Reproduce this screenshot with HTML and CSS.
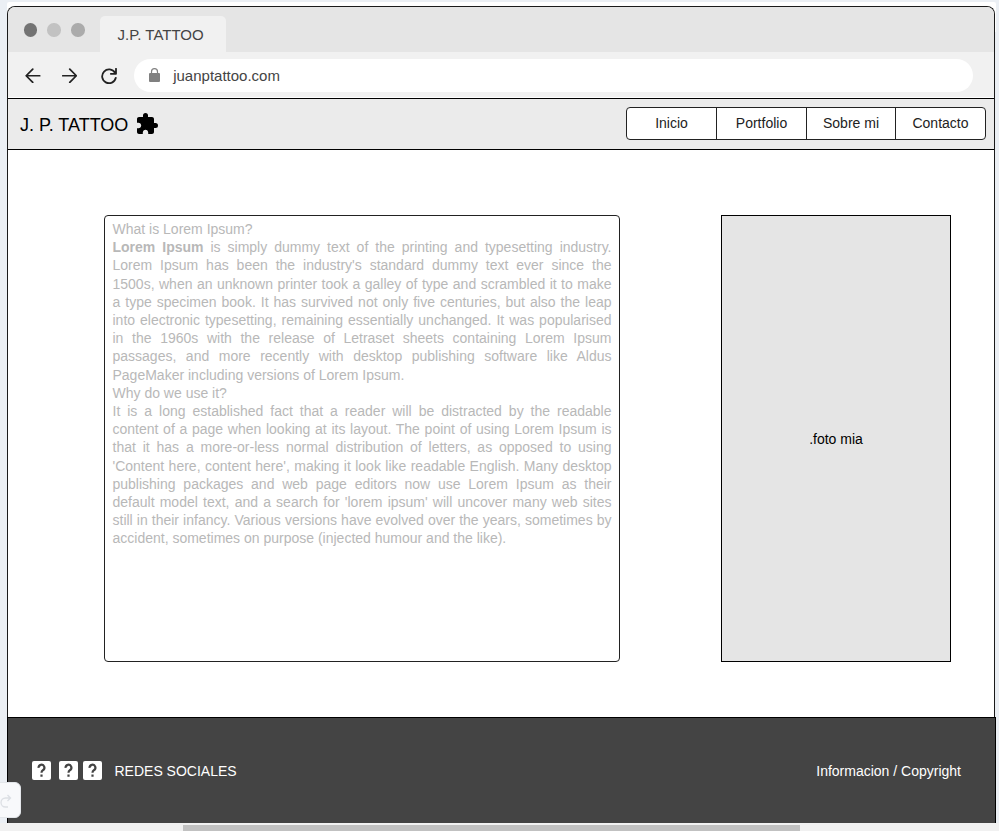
FILE: index.html
```html
<!DOCTYPE html>
<html lang="es">
<head>
<meta charset="utf-8">
<title>J.P. TATTOO</title>
<link rel="stylesheet" href="styles.css">
</head>
<body>
<div class="canvas">
  <div class="window">
    <div class="tabs">
      <span class="dot dark"></span><span class="dot light"></span><span class="dot mid"></span>
      <div class="tab">J.P. TATTOO</div>
    </div>
    <div class="toolbar">
      <svg class="nav back" viewBox="0 0 16 16"><path d="M15.200 8H1.500M8 1.200L1.200 8L8 14.800"/></svg>
      <svg class="nav forward" viewBox="0 0 16 16"><path d="M.8 8H14.500M8 1.200L14.800 8L8 14.800"/></svg>
      <svg class="nav reload" viewBox="0 0 16 16"><path d="M14 4.800A6.900 6.900 0 1 0 14.800 9.800M15 .8V5.800H9.800"/></svg>
      <div class="address">
        <svg class="lock" viewBox="0 0 11 14"><rect y="5" width="11" height="9" rx="1"/><path class="shackle" d="M2.500 5.500V3.700a3 3 0 0 1 6 0v1.800"/></svg>
        <span class="url">juanptattoo.com</span>
      </div>
    </div>
    <header class="header">
      <span class="brand">J. P. TATTOO</span>
      <svg class="puzzle" viewBox="1 1 22 22"><path d="M20.500 11H19V7c0-1.100-.9-2-2-2h-4V3.500a2.500 2.500 0 0 0-5 0V5H4c-1.100 0-1.990.9-1.990 2v3.800H3.500c1.490 0 2.700 1.210 2.700 2.700s-1.210 2.700-2.700 2.700H2V20c0 1.100.9 2 2 2h3.800v-1.500c0-1.490 1.210-2.700 2.700-2.700s2.700 1.210 2.700 2.700V22H17c1.100 0 2-.9 2-2v-4h1.500a2.500 2.500 0 0 0 0-5z"/></svg>
      <nav class="menu"><a>Inicio</a><a>Portfolio</a><a>Sobre mi</a><a>Contacto</a></nav>
    </header>
    <main class="content">
      <section class="article">
        <p>What is Lorem Ipsum?</p>
        <p><b>Lorem Ipsum</b> is simply dummy text of the printing and typesetting industry. Lorem Ipsum has been the industry's standard dummy text ever since the 1500s, when an unknown printer took a galley of type and scrambled it to make a type specimen book. It has survived not only five centuries, but also the leap into electronic typesetting, remaining essentially unchanged. It was popularised in the 1960s with the release of Letraset sheets containing Lorem Ipsum passages, and more recently with desktop publishing software like Aldus PageMaker including versions of Lorem Ipsum.</p>
        <p>Why do we use it?</p>
        <p>It is a long established fact that a reader will be distracted by the readable content of a page when looking at its layout. The point of using Lorem Ipsum is that it has a more-or-less normal distribution of letters, as opposed to using 'Content here, content here', making it look like readable English. Many desktop publishing packages and web page editors now use Lorem Ipsum as their default model text, and a search for 'lorem ipsum' will uncover many web sites still in their infancy. Various versions have evolved over the years, sometimes by accident, sometimes on purpose (injected humour and the like).</p>
      </section>
      <div class="photo">.foto mia</div>
    </main>
  </div>
  <footer class="footer">
    <div class="social">
      <svg viewBox="0 0 19 19"><rect width="19" height="19" rx="2"/><path d="M6.600 6.900A2.900 2.900 0 1 1 10.900 9.200Q9.500 10.200 9.500 11.800M9.500 13.400V15.700"/></svg>
      <svg viewBox="0 0 19 19"><rect width="19" height="19" rx="2"/><path d="M6.600 6.900A2.900 2.900 0 1 1 10.900 9.200Q9.500 10.200 9.500 11.800M9.500 13.400V15.700"/></svg>
      <svg viewBox="0 0 19 19"><rect width="19" height="19" rx="2"/><path d="M6.600 6.900A2.900 2.900 0 1 1 10.900 9.200Q9.500 10.200 9.500 11.800M9.500 13.400V15.700"/></svg>
    </div>
    <span class="networks">REDES SOCIALES</span>
    <span class="info">Informacion / Copyright</span>
  </footer>
</div>
<div class="scrollbar"><div class="thumb"></div></div>
<div class="redo"><svg viewBox="0 0 12 14"><path d="M8 13H5.500A4.500 4.500 0 0 1 5.500 4H10M7.500 1L10.500 4L7.500 7"/></svg></div>
</body>
</html>
```

FILE: styles.css
```css
* { box-sizing: border-box; }
body {
  margin: 0;
  height: 831px;
  overflow: hidden;
  position: relative;
  display: flex;
  flex-direction: column;
  background: #ebeff4;
  font: 14px/18.2px "Liberation Sans", Arial, sans-serif;
  color: #000;
}
svg { display: block; flex: none; }
p { margin: 0; }
.canvas {
  width: 989px;
  height: 821px;
  margin: 2px 0 0 7px;
  padding-top: 4px;
  background: linear-gradient(#fff 30px, transparent 30px);
  border-radius: 2px 2px 0 0;
}
.window {
  width: 988px;
  height: 711px;
  border: 1px solid #1a1a1a;
  border-bottom: 0;
  border-radius: 8px 8px 0 0;
  background: #fff;
  overflow: hidden;
}
.tabs {
  display: flex;
  height: 45px;
  padding-left: 15.700px;
  background: #e5e5e5;
}
.dot { width: 13.500px; height: 13.500px; margin: 16px 10.200px 0 0; border-radius: 50%; }
.dark { background: #737373; }
.light { background: #c2c2c2; }
.mid { background: #ababab; }
.tab {
  width: 126px;
  height: 36px;
  margin: 9px 0 0 5.300px;
  padding-left: 17.500px;
  border-radius: 5px 5px 0 0;
  background: #f1f1f1;
  color: #444;
  font-size: 15px;
  line-height: 37px;
}
.toolbar {
  display: flex;
  align-items: center;
  height: 46px;
  padding: 1px 0 0 17px;
  background: #f1f1f1;
  border-bottom: 1px solid #fff;
}
.nav { width: 15.500px; height: 15.500px; fill: none; stroke: #222; stroke-width: 1.800; stroke-linecap: round; stroke-linejoin: round; margin-top: 1px; }
.forward { margin-left: 21px; }
.reload { width: 16px; height: 16px; margin-left: 23.500px; }
.address {
  display: flex;
  align-items: center;
  width: 839px;
  height: 33px;
  margin: 0 0 0 17.200px;
  padding-left: 15px;
  border-radius: 17px;
  background: #fff;
}
.lock { width: 11px; height: 14px; fill: #808080; }
.shackle { fill: none; stroke: #808080; stroke-width: 1.200; }
.url { margin: 2px 0 0 13.500px; color: #444; font-size: 15px; }
.header {
  display: flex;
  align-items: center;
  height: 52px;
  padding: 0 8px 0 12px;
  border: solid #000;
  border-width: 1px 0;
  background: #ebebeb;
}
.brand { font-size: 18px; line-height: 22px; margin-top: 1px; }
.puzzle { width: 22px; height: 22px; margin-left: 7.300px; }
.menu {
  display: grid;
  grid-template-columns: 89px 90px 89px 90px;
  width: 360px;
  height: 33px;
  margin: -1px 0 0 auto;
  border: 1px solid #222;
  border-radius: 4px;
  background: #fff;
  text-align: center;
  line-height: 31px;
  color: #222;
}
.menu a + a { border-left: 1px solid #222; }
.content {
  display: flex;
  justify-content: space-between;
  padding: 65px 43px 0 96px;
}
.article {
  width: 516px;
  height: 447px;
  padding: 4px 7.500px;
  border: 1px solid #222;
  border-radius: 4px;
  color: #b8b8b8;
  text-align: justify;
}
.photo {
  display: flex;
  align-items: center;
  justify-content: center;
  width: 230px;
  height: 447px;
  padding-top: 2px;
  border: 1px solid #000;
  background: #e5e5e5;
}
.footer {
  display: flex;
  align-items: center;
  width: 989px;
  height: 106px;
  padding: 0 34px 0 24px;
  border: solid #000;
  border-width: 1px 1px 0;
  background: #444;
  color: #fff;
}
.social { display: flex; gap: 5px; }
.social svg { width: 19px; height: 19px; fill: #fff; }
.social svg:first-child { margin-right: 3px; }
.social path { fill: none; stroke: #444; stroke-width: 2.200; }
.networks { margin: 2px 0 0 12.500px; }
.info { margin: 2px 0 0 auto; }
.scrollbar { height: 8px; padding: 2px 0 0 183px; background: #f1f1f1; }
.thumb { width: 617px; height: 6px; background: #c1c1c1; }
.redo {
  position: absolute;
  left: -16px;
  top: 782px;
  width: 37px;
  height: 36px;
  padding: 11px 0 0 15px;
  border: 1px solid #e3e6ea;
  border-radius: 6px;
  background: #f8f9fb;
}
.redo svg { width: 12px; height: 14px; fill: none; stroke: #dcdfe4; stroke-width: 1.300; }
```
